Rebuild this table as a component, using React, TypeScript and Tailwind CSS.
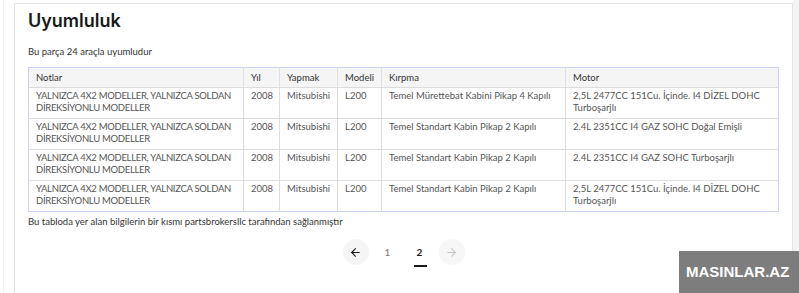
import { ArrowLeft, ArrowRight } from "lucide-react";

const note = ["YALNIZCA 4X2 MODELLER, YALNIZCA SOLDAN", "DİREKSİYONLU MODELLER"];

const rows = [
  {
    year: "2008",
    make: "Mitsubishi",
    model: "L200",
    trim: "Temel Mürettebat Kabini Pikap 4 Kapılı",
    engine: "2,5L 2477CC 151Cu. İçinde. I4 DİZEL DOHC Turboşarjlı",
  },
  {
    year: "2008",
    make: "Mitsubishi",
    model: "L200",
    trim: "Temel Standart Kabin Pikap 2 Kapılı",
    engine: "2.4L 2351CC I4 GAZ SOHC Doğal Emişli",
  },
  {
    year: "2008",
    make: "Mitsubishi",
    model: "L200",
    trim: "Temel Standart Kabin Pikap 2 Kapılı",
    engine: "2.4L 2351CC I4 GAZ SOHC Turboşarjlı",
  },
  {
    year: "2008",
    make: "Mitsubishi",
    model: "L200",
    trim: "Temel Standart Kabin Pikap 2 Kapılı",
    engine: "2,5L 2477CC 151Cu. İçinde. I4 DİZEL DOHC Turboşarjlı",
  },
];

const headers = ["Notlar", "Yıl", "Yapmak", "Modeli", "Kırpma", "Motor"];
const widths = ["w-[215px]", "w-[36px]", "w-[58px]", "w-[44px]", "w-[184px]", ""];

export default function App() {
  return (
    <div
      className="relative w-[799px] h-[293px] overflow-hidden bg-white"
      style={{ fontFamily: "Lato, Inter, sans-serif" }}
    >
      <div className="flex h-full">
        <div className="w-[4px] border-r border-[#f2f2f2]" />
        <div className="w-[10px]" />
        {/* Card */}
        <div className="mt-[3px] w-[779px] h-[300px] border border-[#e3e3e3] border-b-0 pl-[13px] pr-[13px]">
          <h2
            className="mt-[6px] text-[18px] leading-[22px] font-semibold text-[#191919]"
            style={{ fontFamily: "Inter, sans-serif" }}
          >
            Uyumluluk
          </h2>
          <p className="mt-[14px] text-[9.5px] leading-[12px] text-[#333]">
            Bu parça 24 araçla uyumludur
          </p>

          <table className="mt-[9px] w-[751px] border-collapse table-fixed border border-[#ccd3f2] text-[9.5px] leading-[12px] text-[#555]">
            <thead>
              <tr className="bg-[#f5f5f5] h-[20px]">
                {headers.map((h, i) => (
                  <th
                    key={h}
                    className={`${widths[i]} px-[7px] text-left font-normal text-[#333] border-b border-[#dcdcdc] ${
                      i > 0 ? "border-l border-l-[#e0e0e0]" : ""
                    }`}
                  >
                    {h}
                  </th>
                ))}
              </tr>
            </thead>
            <tbody>
              {rows.map((r, i) => {
                const border = i < rows.length - 1 ? "border-b border-[#dedede]" : "";
                return (
                  <tr key={i} className="h-[31px] align-top">
                    <td className={`px-[7px] pt-[2px] pb-[3px] whitespace-nowrap tracking-[-0.3px] ${border}`}>
                      {note[0]}
                      <br />
                      {note[1]}
                    </td>
                    {[r.year, r.make, r.model, r.trim, r.engine].map((c, j) => (
                      <td key={j} className={`px-[7px] pt-[2px] pb-[3px] border-l border-[#dedede] ${border}`}>
                        {c}
                      </td>
                    ))}
                  </tr>
                );
              })}
            </tbody>
          </table>

          <p className="mt-[4px] text-[9.5px] leading-[12px] text-[#333]">
            Bu tabloda yer alan bilgilerin bir kısmı partsbrokersllc tarafından sağlanmıştır
          </p>

          {/* Pagination */}
          <div className="mt-[11px] flex items-center justify-center gap-[6px]">
            <button className="w-[26px] h-[26px] rounded-full bg-[#f5f5f5] flex items-center justify-center text-[#191919]">
              <ArrowLeft size={13} strokeWidth={2} />
            </button>
            <span className="w-[26px] text-center text-[10px] text-[#767676]">1</span>
            <span className="relative w-[26px] text-center text-[10px] font-bold text-[#191919]">
              2
              <span className="absolute left-[7px] top-[20px] w-[13px] h-[2px] bg-[#191919]" />
            </span>
            <button className="w-[26px] h-[26px] rounded-full bg-[#f7f7f7] flex items-center justify-center text-[#c7c7c7]">
              <ArrowRight size={13} strokeWidth={2} />
            </button>
          </div>
        </div>
        <div className="flex-1 bg-[#f4f4f4]" />
      </div>

      {/* Watermark */}
      <div
        className="absolute left-[679px] top-[251px] w-[120px] h-[42px] bg-[#6f6f6f]/90 flex items-center pl-[7px] text-white text-[15px] font-bold"
        style={{ fontFamily: "'Liberation Sans', Arial, sans-serif" }}
      >
        MASINLAR.AZ
      </div>
    </div>
  );
}
